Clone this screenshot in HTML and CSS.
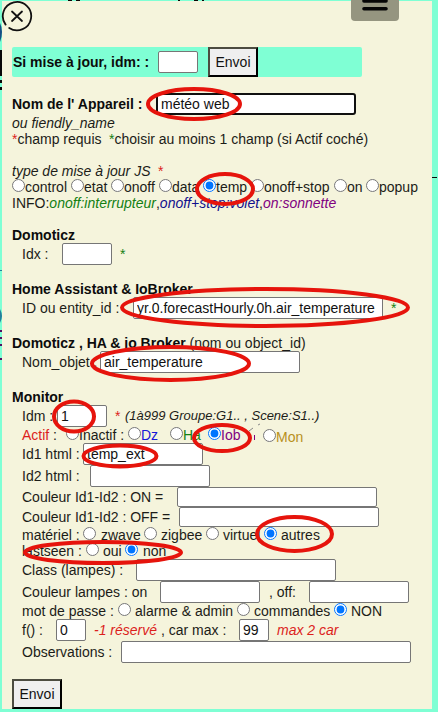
FILE: index.html
```html
<!DOCTYPE html>
<html lang="fr">
<head>
<meta charset="utf-8">
<title>Appareil</title>
<link rel="stylesheet" href="styles.css">
</head>
<body>
<form class="panel">
  <div class="update"><b>Si mise à jour, idm: :</b><input type="text"><button type="button">Envoi</button></div>
  <div class="row field name gap"><b>Nom de l' Appareil :</b><input type="text" class="focused" value="météo web"></div>
  <div class="row"><i>ou fiendly_name</i></div>
  <div class="row notes"><span><span class="red">*</span>champ requis</span><span><span class="green">*</span>choisir au moins 1 champ (si Actif coché)</span></div>

  <div class="row type gap"><i>type de mise à jour JS</i><span class="red">*</span></div>
  <div class="row kinds"><input type="radio" name="k"><span>control</span><input type="radio" name="k"><span>etat</span><input type="radio" name="k"><span>onoff</span><input type="radio" name="k"><span>data</span><input type="radio" name="k" checked><span>temp</span><input type="radio" name="k"><span>onoff+stop</span><input type="radio" name="k"><span>on</span><input type="radio" name="k"><span>popup</span></div>
  <div class="row"><span class="info">INFO:<i class="green">onoff:interrupteur</i>,<i class="navy">onoff+stop:volet</i>,<i class="purple">on:sonnette</i></span></div>

  <div class="row gap"><b>Domoticz</b></div>
  <div class="row field inset idx"><span>Idx :</span><input type="text"><span class="green">*</span></div>

  <div class="row gap"><b>Home Assistant &amp; IoBroker</b></div>
  <div class="row field inset entity"><span>ID ou entity_id :</span><input type="text" value="yr.0.forecastHourly.0h.air_temperature"><span class="green">*</span></div>

  <div class="row gap"><span><b>Domoticz , HA &amp; io Broker</b> (nom ou object_id)</span></div>
  <div class="row field inset object"><span>Nom_objet :</span><input type="text" value="air_temperature"></div>

  <div class="row gap"><b>Monitor</b></div>
  <div class="row field inset idm"><span>Idm :</span><input type="text" value="1"><span class="red">*</span><i class="hint">(1à999 Groupe:G1.. , Scene:S1..)</i></div>
  <div class="row inset active"><span><span class="red">Actif</span> :</span><input type="radio" name="a"><span>Inactif :</span><input type="radio" name="a"><span class="blue">Dz</span><input type="radio" name="a"><span class="green">Ha</span><input type="radio" name="a" checked><span class="purple">Iob</span><input type="radio" name="a" class="lower"><span class="gold lower">Mon</span></div>
  <div class="row field inset id1"><span>Id1 html :</span><input type="text" value="temp_ext"></div>
  <div class="row field inset id2"><span>Id2 html :</span><input type="text"></div>
  <div class="row field short inset on"><span>Couleur Id1-Id2 : ON =</span><input type="text"></div>
  <div class="row field short inset off"><span>Couleur Id1-Id2 : OFF =</span><input type="text"></div>
  <div class="row inset hardware"><span>matériel :</span><input type="radio" name="h"><span>zwave</span><input type="radio" name="h"><span>zigbee</span><input type="radio" name="h"><span>virtuel</span><input type="radio" name="h" checked><span>autres</span></div>
  <div class="row inset seen"><span>lastseen :</span><input type="radio" name="s"><span>oui</span><input type="radio" name="s" checked><span>non</span></div>
  <div class="row field inset lamps"><span>Class (lampes) :</span><input type="text"></div>
  <div class="row field inset colors"><span>Couleur lampes : on</span><input type="text"><span>, off:</span><input type="text"></div>
  <div class="row inset password"><span>mot de passe :</span><input type="radio" name="p"><span>alarme &amp; admin</span><input type="radio" name="p"><span>commandes</span><input type="radio" name="p" checked><span>NON</span></div>
  <div class="row field inset func"><span>f() :</span><input type="text" value="0"><i class="red">-1 réservé</i><span>, car max :</span><input type="text" value="99"><i class="red">max 2 car</i></div>
  <div class="row field inset notes-field"><span>Observations :</span><input type="text"></div>
  <button type="button" class="submit">Envoi</button>
</form>

<svg class="overlay" width="438" height="712" viewBox="0 0 438 712">
  <g class="page-behind">
    <path fill="#080808" d="M68 0h4v1h-4zM76 0h4v1h-4zM178 0h2v1h-2zM194 0h4v1h-4zM202 0h2v1h-2zM0 50h2v26H0zM0 80h2v3H0zM0 87h2v3H0zM432 177h5v1h-5z"/>
    <path fill="#174d83" d="M0 23q2 4 2 9t-2 10z"/>
    <path fill="#247f9b" d="M0 309q2 4 2 7t-2 7zM0 270h2v1H0z"/>
    <path fill="#501060" d="M0 330h2v2H0zM0 337h2v2H0zM0 344h2v2H0zM0 358h2v2H0z"/>
  </g>
  <g class="close" fill="none" stroke="#111" stroke-linecap="round">
    <path stroke-width="1.8" d="M5.600 24.600A14.200 14.200 0 1 1 9.200 28"/>
    <path stroke-width="1.800" d="M12 11.500l10 9.500M22 11.500l-10 9.500"/>
  </g>
  <path fill="#959580" d="M351 0h48v17q0 4-4 4h-40q-4 0-4-4z"/>
  <path stroke="#050505" stroke-width="3.600" stroke-linecap="round" d="M364 1h22M364 8.700h22"/>
  <path fill="#f5f4dc" d="M65 427h15v4h-15zM78 429h5v3h-5z"/>
  <path fill="none" stroke="#888" d="M249 431l4-3M258 425l2-1"/>
  <path fill="none" stroke="#800080" d="M254.500 435v5"/>
  <g fill="none" stroke="#e6140c" stroke-width="4">
    <ellipse cx="194" cy="104" rx="46" ry="15"/>
    <ellipse cx="225" cy="189" rx="28" ry="15"/>
    <ellipse cx="265" cy="307.500" rx="143" ry="18.500"/>
    <ellipse cx="170.500" cy="363.500" rx="78.500" ry="16.500"/>
    <ellipse cx="74" cy="416.500" rx="20" ry="15"/>
    <ellipse cx="222" cy="438" rx="28" ry="13"/>
    <ellipse cx="120" cy="456" rx="36.500" ry="10.500"/>
    <ellipse cx="294.500" cy="534" rx="37.500" ry="17"/>
    <ellipse cx="103" cy="552.500" rx="78" ry="10.500"/>
  </g>
</svg>
</body>
</html>
```
FILE: styles.css
```css
* { box-sizing: border-box; }
body {
  margin: 0;
  height: 712px;
  padding: 1px 6px 3px 2px;
  overflow: hidden;
  background: #7fffd4;
  color: #1c1c18;
  font: 14px/16px "Liberation Sans", Arial, sans-serif;
}
.panel {
  width: 430px;
  height: 708px;
  padding: 46px 0 0 10px;
  background: #f5f4dc;
}
b { color: #0c0c0c; }
input, button { margin: 0; font: inherit; color: #111; }
input[type="text"] {
  width: 100%;
  height: 100%;
  padding: 0 3px;
  border: 1px solid #767676;
  border-radius: 2px;
  background: #fff;
  outline: none;
}
input[type="text"].focused { border: 2px solid #101010; border-radius: 3px; }
input[type="radio"] { width: 13px; height: 13px; align-self: start; }
button {
  width: 50px;
  height: 30px;
  padding: 0;
  border: 2px outset #000;
  border-color: #4c4c40 #000 #000 #4c4c40;
  border-radius: 0;
  background: #efefef;
}
.update {
  display: grid;
  grid-template-columns: 145px 40px 50px;
  align-items: center;
  width: 350px;
  height: 30px;
  padding-left: 1px;
  border-radius: 2px;
  background: #7fffd4;
}
.update input { height: 22px; }
.update button { margin-left: 10px; }
.row {
  display: grid;
  align-items: center;
  justify-content: start;
  height: 16px;
  white-space: nowrap;
}
.field { height: 22px; }
.short { height: 20px; }
.gap { margin-top: 16px; }
.inset { padding-left: 10px; }

.name { grid-template-columns: 144px 200px; }
.notes { grid-template-columns: 97px 250px; }
.type { grid-template-columns: 146px 10px; }
.kinds { grid-template-columns: 13px 46px 13px 27px 13px 35px 13px 31px 13px 35px 13px 70px 13px 19px 13px 40px; }
.idx { grid-template-columns: 40px 50px 10px; }
.idx .green, .entity .green, .idm > .red { padding-left: 8px; }
.entity { grid-template-columns: 111px 250px 20px; }
.object { grid-template-columns: 78px 200px; }
.idm { grid-template-columns: 35px 50px 18px auto; }
.active { grid-template-columns: 44px 13px 49px 13px 29px 13px 25px 13px 42px 13px 30px; }
.active .lower { margin-top: 2px; margin-bottom: -2px; }
.id1 { grid-template-columns: 61px 120px; }
.id2 { grid-template-columns: 68px 120px; }
.on { grid-template-columns: 155px 200px; }
.off { grid-template-columns: 157px 200px; }
.hardware { grid-template-columns: 61px 18px 43px 17px 45px 17px 41px 17px 40px; }
.hardware input, .seen input { margin-left: 0; }
.seen { grid-template-columns: 64px 17px 22px 18px 30px; }
.lamps { grid-template-columns: 114px 200px; }
.colors { grid-template-columns: 138px 100px 49px 100px; }
.colors span + input + span { padding-left: 9px; }
.password { grid-template-columns: 96px 17px 102px 17px 80px 17px 30px; }
.func { grid-template-columns: 34px 30px 75px 78px 30px 80px; }
.func i { padding-left: 8px; }
.notes-field { grid-template-columns: 99px 290px; }
.submit { display: block; margin-top: 16px; }
.hint { font-size: 13px; }

.red { color: #dc1f1c; }
.green { color: #138013; }
.navy { color: #10108c; }
.blue { color: #1717d8; }
.purple { color: #800080; }
.gold { color: #b8901c; }
.overlay { position: absolute; left: 0; top: 0; pointer-events: none; }
```
